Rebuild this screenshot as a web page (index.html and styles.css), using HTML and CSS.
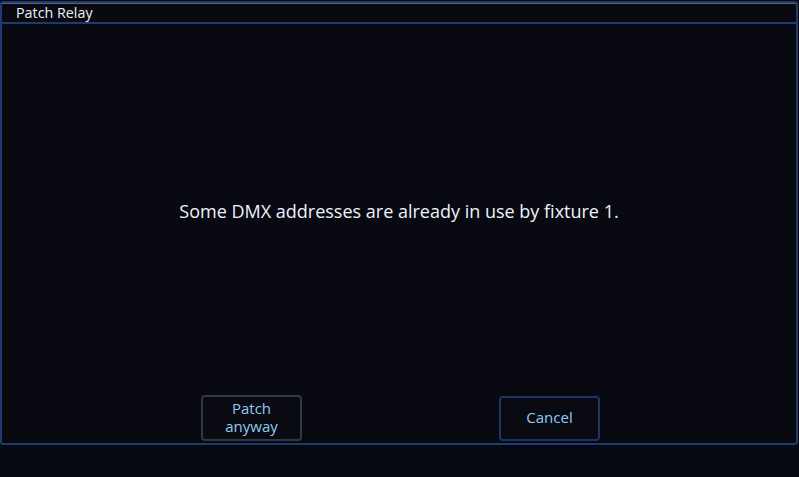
FILE: index.html
```html
<!DOCTYPE html>
<html>
<head>
<meta charset="utf-8">
<link rel="stylesheet" href="styles.css">
</head>
<body>
<div class="dialog">
  <div class="titlebar">Patch Relay</div>
  <div class="content">
    <div class="message">Some DMX addresses are already in use by fixture 1.</div>
    <div class="buttons">
      <div class="btn btn-grey"><span class="line">Patch</span><span class="line">anyway</span></div>
      <div class="btn btn-blue"><span class="line">Cancel</span></div>
    </div>
  </div>
</div>
</body>
</html>
```
FILE: styles.css
```css
html, body {
  margin: 0;
  padding: 0;
  background: #070910;
  width: 799px;
  height: 477px;
  overflow: hidden;
  font-family: "Open Sans", "Noto Sans", sans-serif;
}
.dialog {
  margin-top: 1px;
  width: 794px;
  height: 440px;
  border: 2px solid #1d3b72;
  border-radius: 3px;
  display: flex;
  flex-direction: column;
  background: #080911;
}
.titlebar {
  height: 18px;
  border-top: 1px solid #5b606c;
  border-bottom: 2px solid #1d3b72;
  color: #eef2fa;
  font-size: 14.3px;
  line-height: 18px;
  padding-left: 14px;
}
.content {
  flex: 1;
  display: flex;
  flex-direction: column;
}
.message {
  flex: 1;
  display: flex;
  align-items: center;
  justify-content: center;
  color: #eef3fb;
  font-size: 18px;
  padding-top: 2px;
}
.buttons {
  display: flex;
  height: 46px;
  margin-bottom: 2px;
  padding-left: 199px;
  gap: 197px;
}
.btn {
  width: 97px;
  border-radius: 4px;
  display: flex;
  flex-direction: column;
  align-items: center;
  justify-content: center;
  text-align: center;
  color: #8fcaf2;
  font-size: 15px;
  background: #0a0b12;
  box-sizing: content-box;
}
.line {
  display: block;
  line-height: 18px;
  height: 18px;
}
.btn-grey {
  border: 2px solid #34373f;
  height: 40px;
  padding-bottom: 2px;
}
.btn-blue {
  border: 2px solid #1b3566;
  margin-top: 1px;
  height: 38px;
  padding-bottom: 3px;
}
```
